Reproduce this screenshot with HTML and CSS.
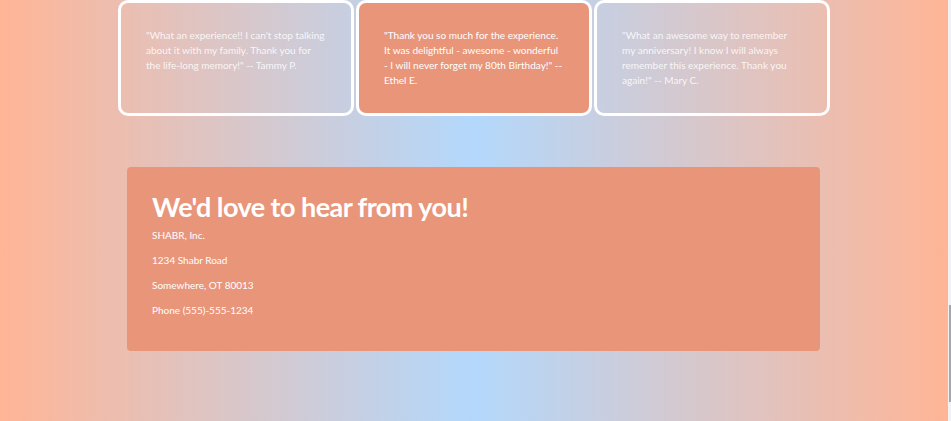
FILE: index.html
```html
<!DOCTYPE html>
<html lang="en">
<head>
<meta charset="utf-8">
<title>SHABR</title>
<link rel="stylesheet" href="styles.css">
</head>
<body>
<main class="page">
  <section class="testimonials">
    <div class="card card-compact">
      <p>"What an experience!! I can't stop talking about it with my family. Thank you for the life-long memory!" -- Tammy P.</p>
    </div>
    <div class="card card-filled">
      <p>"Thank you so much for the experience. It was delightful - awesome - wonderful - I will never forget my 80th Birthday!" -- Ethel E.</p>
    </div>
    <div class="card">
      <p>"What an awesome way to remember my anniversary! I know I will always remember this experience. Thank you again!" -- Mary C.</p>
    </div>
  </section>
  <section class="contact">
    <h1>We'd love to hear from you!</h1>
    <p>SHABR, Inc.</p>
    <p>1234 Shabr Road</p>
    <p>Somewhere, OT 80013</p>
    <p>Phone (555)-555-1234</p>
  </section>
</main>
<div class="scrollbar"><div class="thumb"></div></div>
</body>
</html>
```
FILE: styles.css
```css
html, body {
  margin: 0;
  padding: 0;
  height: 421px;
  overflow: hidden;
}
body {
  font-family: Lato, "Open Sans", sans-serif;
  color: #fff;
  background: linear-gradient(to right, #ffb596 0%, #b3d8fc 50%, #ffb596 100%);
  background-size: 948px 100%;
  background-repeat: no-repeat;
}
.page {
  width: 948px;
  display: flex;
  flex-direction: column;
  align-items: center;
}
.testimonials {
  display: flex;
  gap: 2px;
  width: 712px;
}
.card {
  width: 236px;
  box-sizing: border-box;
  border: 3px solid #ffffff;
  border-radius: 10px;
  padding: 25px;
  height: 116px;
}
.card p {
  margin: 0;
  font-size: 10.05px;
  line-height: 15px;
  color: rgba(255, 255, 255, 0.85);
}
.card-compact p {
  letter-spacing: -0.04px;
}
.card-filled {
  background: #e8957a;
}
.card-filled p {
  color: #fff;
}
.contact {
  margin-top: 51px;
  width: 693px;
  height: 184px;
  box-sizing: border-box;
  background: #e8957a;
  border-radius: 4px;
  padding: 22px 25px;
  margin-right: 1px;
}
.contact h1 {
  margin: 0 0 3px 0;
  font-size: 27px;
  font-weight: 700;
  letter-spacing: -0.55px;
  line-height: 36px;
}
.contact p {
  margin: 0 0 10px 0;
  font-size: 10px;
  line-height: 15px;
}
.scrollbar {
  position: fixed;
  top: 0;
  right: 0;
  width: 3px;
  height: 421px;
  background: #f1f1f1;
}
.thumb {
  position: absolute;
  top: 305px;
  left: 1px;
  width: 2px;
  height: 97px;
  background: #a8a8a8;
}
```
